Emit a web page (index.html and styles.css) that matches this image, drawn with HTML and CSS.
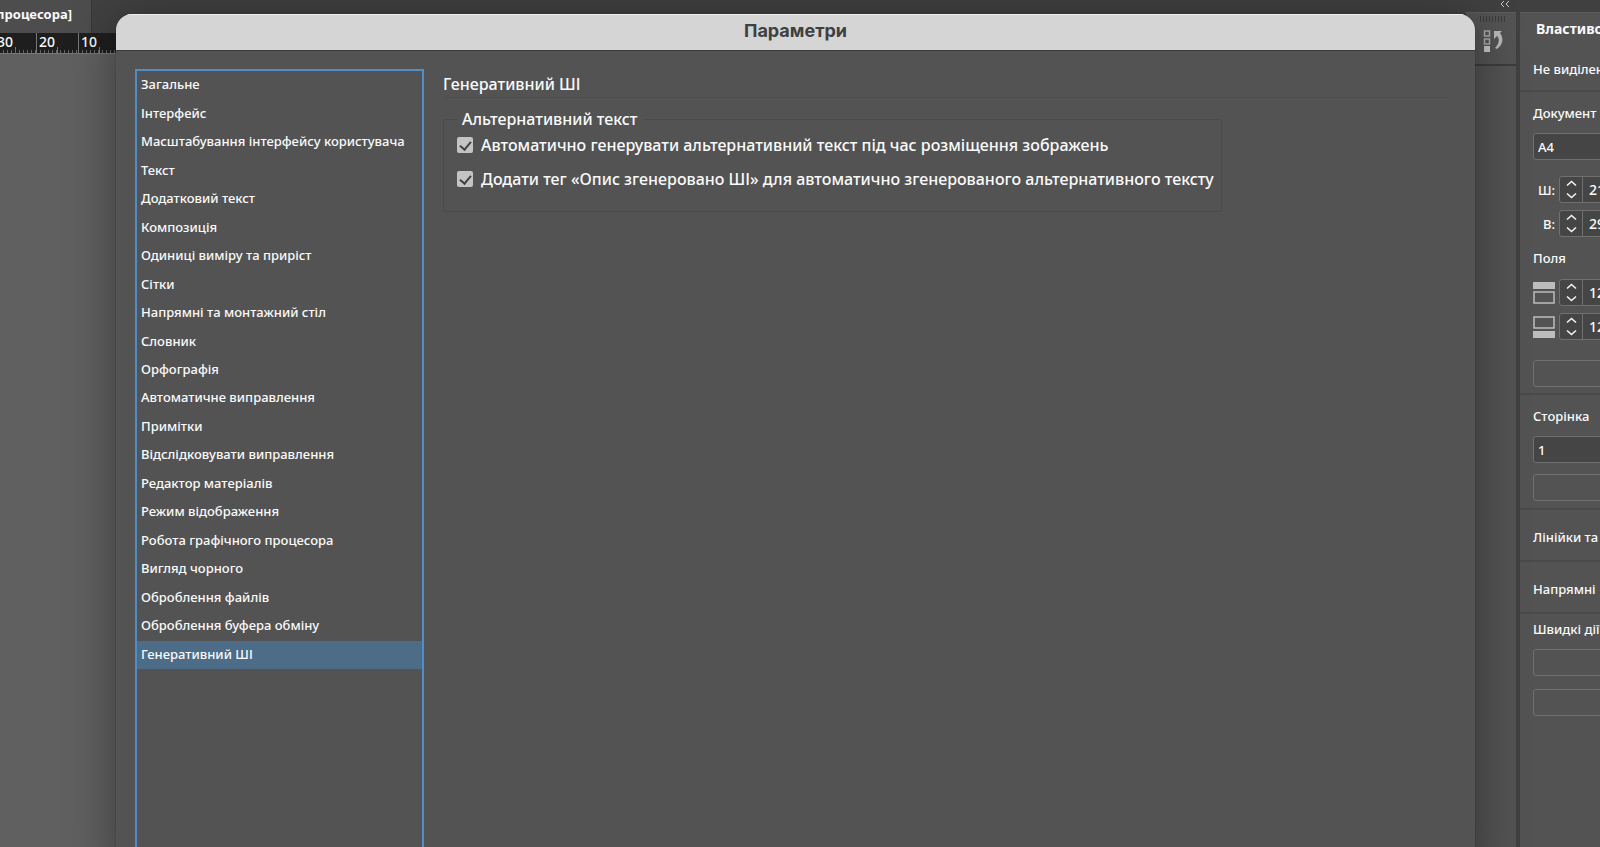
FILE: index.html
```html
<!DOCTYPE html>
<html lang="uk">
<head>
    <meta charset="UTF-8">
    <meta name="viewport" content="width=device-width, initial-scale=1.0">
    <title>Параметри</title>
    <link rel="stylesheet" href="styles.css">
</head>
<body>
    <svg width="0" height="0" class="defs">
        <symbol id="arrows" viewBox="0 0 22 25">
            <path d="M7 8.5l4.5-4 4.500 4M7 16.5l4.5 4 4.5-4" fill="none" stroke="#f2f2f2" stroke-width="1.6"/>
        </symbol>
    </svg>
    <div class="app">
        <div class="workspace">
            <div class="tabs">
                <div class="tab"><span>процесора]</span></div>
            </div>
            <div class="ruler">
                <span class="ruler-first">30</span>
                <span>20</span>
                <span>10</span>
            </div>
            <div class="canvas"></div>
        </div>
        <div class="side">
            <div class="side-top">
                <svg width="10" height="8" viewBox="0 0 10 8"><path d="M4 1L1 4l3 3M9 1L6 4l3 3" fill="none" stroke="#c8c8c8"/></svg>
            </div>
            <div class="side-body">
                <div class="dock">
                    <div class="dock-group">
                        <div class="grip"></div>
                        <svg width="22" height="24" viewBox="0 0 22 24">
                            <path d="M1.500 2h5v5h-5zM1.500 10h5v5h-5z" fill="none" stroke="#a8a8a8" stroke-width="1.5"/>
                            <path d="M1 17h6v6H1z" fill="#c4c4c4"/>
                            <path d="M11 2h8l-2 2c4 5 3 12-3 16l-2-1c4-4 5-9 2-12l-3 3z" fill="#b8b8b8"/>
                        </svg>
                    </div>
                </div>
                <div class="panel">
                    <h2>Властивості</h2>
                    <p class="state">Не виділено</p>
                    <section class="doc">
                        <label for="size">Документ</label>
                        <select id="size"><option>A4</option></select>
                        <div class="field">
                            <label for="w">Ш:</label>
                            <div class="spin"><button aria-label="Ш"><svg width="22" height="25"><use href="#arrows"/></svg></button><input id="w" value="210 мм"></div>
                        </div>
                        <div class="field">
                            <label for="h">В:</label>
                            <div class="spin"><button aria-label="В"><svg width="22" height="25"><use href="#arrows"/></svg></button><input id="h" value="297 мм"></div>
                        </div>
                        <h3>Поля</h3>
                        <div class="field">
                            <svg width="22" height="22"><path d="M0 0h22v7H0z" fill="#bdbdbd"/><path d="M1 10h20v11H1z" fill="none" stroke="#bdbdbd" stroke-width="1.5"/></svg>
                            <div class="spin"><button aria-label="Верхнє поле"><svg width="22" height="25"><use href="#arrows"/></svg></button><input aria-label="Верхнє поле" value="12,7 мм"></div>
                        </div>
                        <div class="field">
                            <svg width="22" height="22"><path d="M1 1h20v11H1z" fill="none" stroke="#bdbdbd" stroke-width="1.5"/><path d="M0 15h22v7H0z" fill="#bdbdbd"/></svg>
                            <div class="spin"><button aria-label="Нижнє поле"><svg width="22" height="25"><use href="#arrows"/></svg></button><input aria-label="Нижнє поле" value="12,7 мм"></div>
                        </div>
                        <button class="wide"></button>
                    </section>
                    <section class="page">
                        <label for="page">Сторінка</label>
                        <select id="page"><option>1</option></select>
                        <button class="wide"></button>
                    </section>
                    <section class="row"><h3>Лінійки та сітки</h3></section>
                    <section class="row"><h3>Напрямні</h3></section>
                    <section class="quick">
                        <h3>Швидкі дії</h3>
                        <button class="wide"></button>
                        <button class="wide"></button>
                    </section>
                </div>
            </div>
        </div>

        <div class="dialog" role="dialog" aria-labelledby="title">
            <h1 id="title">Параметри</h1>
            <div class="dialog-body">
                <div class="categories">
                    <ul>
                        <li>Загальне</li>
                        <li>Інтерфейс</li>
                        <li>Масштабування інтерфейсу користувача</li>
                        <li>Текст</li>
                        <li>Додатковий текст</li>
                        <li>Композиція</li>
                        <li>Одиниці виміру та приріст</li>
                        <li>Сітки</li>
                        <li>Напрямні та монтажний стіл</li>
                        <li>Словник</li>
                        <li>Орфографія</li>
                        <li>Автоматичне виправлення</li>
                        <li>Примітки</li>
                        <li>Відслідковувати виправлення</li>
                        <li>Редактор матеріалів</li>
                        <li>Режим відображення</li>
                        <li>Робота графічного процесора</li>
                        <li>Вигляд чорного</li>
                        <li>Оброблення файлів</li>
                        <li>Оброблення буфера обміну</li>
                        <li class="selected">Генеративний ШІ</li>
                    </ul>
                </div>
                <div class="content">
                    <h2>Генеративний ШІ</h2>
                    <fieldset>
                        <legend>Альтернативний текст</legend>
                        <label><input type="checkbox" checked> Автоматично генерувати альтернативний текст під час розміщення зображень</label>
                        <label><input type="checkbox" checked> Додати тег «Опис згенеровано ШІ» для автоматично згенерованого альтернативного тексту</label>
                    </fieldset>
                </div>
            </div>
        </div>
    </div>
</body>
</html>
```
FILE: styles.css
```css
* {
    box-sizing: border-box;
}
body {
    margin: 0;
    font-family: "Noto Sans", sans-serif;
    font-size: 13px;
    font-weight: 500;
    line-height: 20px;
    color: #fafafa;
    background: #535353;
}
h1, h2, h3, p, ul {
    margin: 0;
    padding: 0;
    font-size: 13px;
    font-weight: 500;
}
svg {
    display: block;
    flex: none;
}
.defs {
    position: absolute;
}
.app {
    position: relative;
    display: flex;
    height: 100vh;
    overflow: hidden;
}

/* document window */
.workspace {
    flex: 1;
    display: flex;
    flex-direction: column;
}
.tabs {
    height: 33px;
    background: #404040;
}
.tab {
    display: flex;
    justify-content: flex-end;
    width: 92px;
    height: 33px;
    padding: 4px 19px 0 0;
    overflow: hidden;
    background: #4d4d4d;
    border-right: 1px solid #383838;
    font-weight: 700;
}
.ruler {
    display: flex;
    height: 21px;
    background: #1e1e1e;
    border-bottom: 1px solid #777;
    font-size: 14px;
    line-height: 18px;
}
.ruler span {
    width: 42px;
    padding-left: 2px;
    border-left: 1px solid #777;
    background: repeating-linear-gradient(90deg, transparent 0 3px, #666 3px 4px) bottom / 100% 3px no-repeat,
        linear-gradient(#777, #777) 20px 100% / 1px 6px no-repeat;
}
.ruler .ruler-first {
    display: flex;
    justify-content: flex-end;
    width: 36px;
    padding: 0 23px 0 0;
    border-left: 0;
    background-position: bottom, 15px 100%;
}
.canvas {
    flex: 1;
    background: #606060;
}

/* right side */
.side {
    width: 134px;
    display: flex;
    flex-direction: column;
    background: #404040;
}
.side-top {
    height: 12px;
    padding-left: 34px;
}
.side-body {
    flex: 1;
    display: flex;
    gap: 4px;
    min-height: 0;
}
.dock {
    width: 50px;
    background: #535353;
    border-top: 1px solid #5e5e5e;
}
.dock-group {
    height: 53px;
    padding: 3px 0 0 14px;
    border-bottom: 2px solid #3c3c3c;
}
.dock-group svg {
    margin-left: 3px;
}
.grip {
    width: 25px;
    height: 6px;
    margin-bottom: 7px;
    background: repeating-linear-gradient(90deg, #3a3a3a 0 1px, transparent 1px 3px);
}
.panel {
    flex: 1;
    min-width: 0;
    overflow: hidden;
    white-space: nowrap;
    background: #535353;
    border-top: 1px solid #5e5e5e;
}
.panel h2 {
    padding: 6px 0 0 16px;
    font-size: 14px;
    font-weight: 700;
}
.state {
    height: 51px;
    padding: 20px 0 0 13px;
}
.panel section {
    padding-left: 13px;
    border-top: 2px solid #4a4a4a;
}
.panel section > label, .panel h3 {
    display: block;
}
.doc {
    height: 303px;
    padding-top: 11px;
}
.doc h3 {
    margin-top: 11px;
}
.page {
    height: 115px;
    padding-top: 11px;
}
.row {
    height: 52px;
    padding-top: 17px;
}
.quick {
    padding-top: 5px;
}
select, .wide {
    display: block;
    width: 240px;
    height: 27px;
    border: 1px solid #707070;
    border-radius: 3px;
    background: #535353;
    color: #fafafa;
    font: inherit;
}
select {
    margin-top: 10px;
    padding: 0 4px;
    appearance: none;
    background: #454545;
}
.wide {
    margin-top: 11px;
}
.doc .wide {
    margin-top: 20px;
}
.quick .wide {
    margin-top: 10px;
}
.quick .wide + .wide {
    margin-top: 13px;
}
.field {
    display: flex;
    align-items: center;
    gap: 4px;
    margin-top: 7px;
}
.doc select + .field {
    margin-top: 16px;
}
.doc h3 + .field {
    margin-top: 11px;
}
.field label {
    flex: none;
    width: 22px;
    text-align: right;
}
.spin {
    display: flex;
    height: 27px;
    border: 1px solid #707070;
    border-radius: 3px;
    background: #454545;
}
.spin button {
    width: 23px;
    padding: 0;
    border: 0;
    border-right: 1px solid #707070;
    background: none;
}
.spin input {
    width: 90px;
    padding: 0 6px;
    border: 0;
    background: none;
    color: #fafafa;
    font: inherit;
    font-size: 14px;
}

/* preferences window */
.dialog {
    position: absolute;
    top: 14px;
    right: 125px;
    bottom: -20px;
    left: 116px;
    display: flex;
    flex-direction: column;
    overflow: hidden;
    border-radius: 16px;
    background: #535353;
    box-shadow: 0 10px 50px rgba(0, 0, 0, 0.4), 0 0 1px #222;
}
.dialog h1 {
    height: 37px;
    background: #d5d5d5;
    border-top: 1px solid #eee;
    border-bottom: 1px solid #3c3c3c;
    color: #404040;
    font-family: Inter, sans-serif;
    font-size: 18px;
    font-weight: 700;
    line-height: 32px;
    text-align: center;
}
.dialog-body {
    flex: 1;
    display: flex;
    gap: 19px;
    padding: 18px 27px 0 19px;
}
.categories {
    width: 289px;
    border: 2px solid #4f8fc9;
}
.categories ul {
    display: grid;
    grid-auto-rows: 1fr;
    height: 598px;
    list-style: none;
}
.categories li {
    display: flex;
    align-items: center;
    padding: 0 0 2px 4px;
    white-space: nowrap;
}
.categories .selected {
    background: #4d6c88;
}
.content {
    flex: 1;
    font-size: 16px;
}
.content h2 {
    height: 29px;
    padding-top: 5px;
    border-bottom: 1px solid #4d4d4d;
    font-size: 16px;
}
.content fieldset {
    width: fit-content;
    margin: 11px 0 0;
    padding: 6px 7px 22px 13px;
    border: 1px solid #4b4b4b;
    border-radius: 2px;
}
.content legend {
    padding: 0 5px;
}
.content label {
    display: flex;
    align-items: center;
    gap: 8px;
}
.content label + label {
    margin-top: 14px;
}
.content input {
    width: 16px;
    height: 16px;
    margin: 0;
    appearance: none;
    border-radius: 2px;
    background: #c4c4c4;
}
.content input:checked::before {
    content: "";
    display: block;
    width: 5px;
    height: 9px;
    margin: 2px 5px;
    border: solid #404040;
    border-width: 0 2px 2px 0;
    transform: rotate(40deg);
}
```
